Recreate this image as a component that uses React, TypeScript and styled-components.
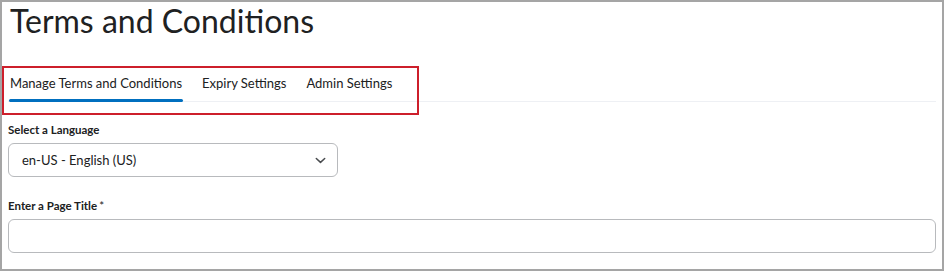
import React from "react";
import styled, { createGlobalStyle } from "styled-components";

const GlobalStyle = createGlobalStyle`
  html, body {
    margin: 0;
    padding: 0;
    background: #ffffff;
  }
  body {
    font-family: Lato, "Noto Sans", sans-serif;
    color: #202122;
  }
`;

const Frame = styled.div`
  position: relative;
  box-sizing: border-box;
  width: 944px;
  height: 271px;
  border: 2px solid #a5a5a5;
  background: #ffffff;
  overflow: hidden;
  display: flex;
  flex-direction: column;
`;

const Title = styled.h1`
  margin: 0;
  padding: 1px 0 0 8px;
  font-size: 32px;
  font-weight: 400;
  line-height: 36px;
  color: #202122;
`;

// red annotation box drawn over the tab strip
const Highlight = styled.div`
  position: absolute;
  top: 64px;
  left: 0;
  width: 417px;
  height: 49px;
  box-sizing: border-box;
  border: 2px solid #cd1f2b;
  pointer-events: none;
`;

const TabBar = styled.div`
  display: flex;
  gap: 18px;
  margin: 36px 0 0 6px;
  padding-left: 1px;
  width: 928px;
  box-sizing: border-box;
  border-bottom: 1px solid #eef0f4;
`;

const Tab = styled.div<{ active?: boolean }>`
  position: relative;
  padding: 0 1px;
  height: 26px;
  font-size: 13px;
  line-height: 16px;
  color: #202122;
  white-space: nowrap;

  &::after {
    content: "";
    display: ${(p) => (p.active ? "block" : "none")};
    position: absolute;
    left: 0;
    right: 0;
    bottom: -1px;
    height: 3px;
    border-radius: 2px;
    background: #006fbf;
  }
`;

const Form = styled.div`
  padding: 20px 6px 0;
  display: flex;
  flex-direction: column;
`;

const Label = styled.label`
  display: block;
  font-size: 11.5px;
  font-weight: 700;
  line-height: 16px;
  color: #202122;
  margin-bottom: 5px;
`;

const Field = styled.div<{ wide?: boolean }>`
  box-sizing: border-box;
  width: ${(p) => (p.wide ? "928px" : "330px")};
  height: 34px;
  border: 1px solid #b8babd;
  border-radius: 6px;
  display: flex;
  align-items: center;
  justify-content: space-between;
  padding: 0 11px 0 13px;
  font-size: 13px;
  color: #202122;
  margin-bottom: ${(p) => (p.wide ? "0" : "21px")};
`;

const Required = styled.span`
  font-weight: 400;
  margin-left: 2px;
`;

const Chevron = () => (
  <svg width="11" height="7" viewBox="0 0 11 7" aria-hidden>
    <path d="M1.3 1.5 L5.5 5.4 L9.7 1.5" fill="none" stroke="#494c4f" strokeWidth="1.5" strokeLinecap="round" strokeLinejoin="round" />
  </svg>
);

export default function App() {
  return (
    <>
      <GlobalStyle />
      <Frame>
        <Title>Terms and Conditions</Title>
        <TabBar>
          <Tab active>Manage Terms and Conditions</Tab>
          <Tab>Expiry Settings</Tab>
          <Tab>Admin Settings</Tab>
        </TabBar>
        <Form>
          <Label>Select a Language</Label>
          <Field>
            <span>en-US - English (US)</span>
            <Chevron />
          </Field>
          <Label>
            Enter a Page Title<Required>*</Required>
          </Label>
          <Field wide />
        </Form>
        <Highlight />
      </Frame>
    </>
  );
}
